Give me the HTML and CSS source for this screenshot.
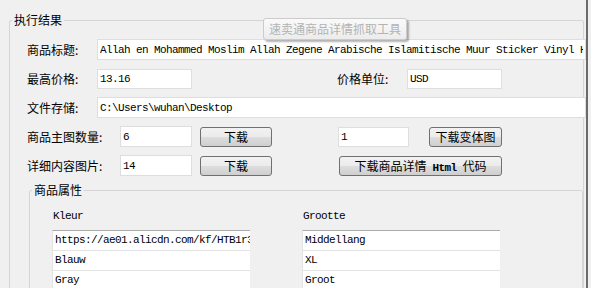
FILE: index.html
```html
<!DOCTYPE html>
<html lang="zh-CN">
<head>
  <meta charset="UTF-8">
  <title>速卖通商品详情抓取工具</title>
  <link rel="stylesheet" href="styles.css">
</head>
<body>
  <div class="window">
    <!-- 执行结果 -->
    <fieldset class="group result">
      <legend>执行结果</legend>
      <div class="rows">
        <div class="row">
          <span class="label">商品标题:</span>
          <input class="field wide" type="text" value="Allah en Mohammed Moslim Allah Zegene Arabische Islamitische Muur Sticker Vinyl Home Decor">
        </div>
        <div class="row">
          <span class="label">最高价格:</span>
          <input class="field price" type="text" value="13.16">
          <span class="label unit-label">价格单位:</span>
          <input class="field price" type="text" value="USD">
        </div>
        <div class="row">
          <span class="label">文件存储:</span>
          <input class="field wide" type="text" value="C:\Users\wuhan\Desktop">
        </div>
        <div class="row">
          <span class="label long">商品主图数量:</span>
          <input class="field count" type="text" value="6">
          <button class="btn small">下载</button>
          <input class="field variant" type="text" value="1">
          <button class="btn variant-btn">下载变体图</button>
        </div>
        <div class="row">
          <span class="label long">详细内容图片:</span>
          <input class="field count" type="text" value="14">
          <button class="btn small">下载</button>
          <button class="btn html-btn">下载商品详情<span class="mono">Html</span>代码</button>
        </div>
      </div>

      <!-- 商品属性 -->
      <fieldset class="group attrs">
        <legend>商品属性</legend>
        <div class="columns">
          <div class="column">
            <div class="col-title">Kleur</div>
            <div class="list">
              <div class="cell">https://ae01.alicdn.com/kf/HTB1r3</div>
              <div class="cell">Blauw</div>
              <div class="cell">Gray</div>
            </div>
          </div>
          <div class="column">
            <div class="col-title">Grootte</div>
            <div class="list">
              <div class="cell">Middellang</div>
              <div class="cell">XL</div>
              <div class="cell">Groot</div>
            </div>
          </div>
        </div>
      </fieldset>
    </fieldset>

    <div class="tooltip">速卖通商品详情抓取工具</div>
  </div>
</body>
</html>
```

FILE: styles.css
```css
body {
  margin: 0;
  background-color: #f0f0f0;
  font-family: "Noto Sans CJK SC", "Liberation Sans", sans-serif;
  font-size: 12px;
  color: #000;
}
.window {
  position: relative;
  width: 586px;
  height: 288px;
  border-right: 2px solid #6b6b6b;
  overflow: hidden;
}
.group {
  margin: 0;
  padding: 0;
  border: 1px solid #d5d5d5;
  border-radius: 2px;
  min-width: 0;
}
.group legend {
  margin-left: 2px;
  padding: 0 2px;
  font-size: 12px;
  line-height: 14px;
}
.result {
  margin: 13px 0 0 9px;
  width: 573px;
  height: 320px;
}
.rows {
  display: flex;
  flex-direction: column;
  gap: 8px;
  padding: 12px 0 0 17px;
}
.row {
  display: flex;
  align-items: center;
  height: 21px;
}
.label {
  width: 70px;
  flex: none;
  white-space: nowrap;
}
.label.long {
  width: 93px;
}
.unit-label {
  margin-left: 145px;
}
.field {
  box-sizing: border-box;
  height: 21px;
  margin: 0;
  padding: 0 2px;
  border: 1px solid #dedede;
  background: #fff;
  font-family: "Liberation Mono", monospace;
  font-size: 11px;
  letter-spacing: -0.6px;
  color: #000;
  outline: none;
  flex: none;
}
.field.wide {
  width: 489px;
}
.field.price {
  width: 95px;
  height: 20px;
}
.field.count {
  width: 72px;
}
.field.variant {
  width: 71px;
  height: 20px;
  margin-left: 66px;
}
.btn {
  box-sizing: border-box;
  height: 20px;
  margin: 0;
  padding: 0;
  border: 1px solid #707070;
  border-radius: 3px;
  background: linear-gradient(#f2f2f2 0%, #ebebeb 50%, #dddddd 51%, #cfcfcf 100%);
  font-family: "Noto Sans CJK SC", sans-serif;
  font-size: 12px;
  line-height: 18px;
  color: #000;
  flex: none;
}
.btn.small {
  width: 72px;
  margin-left: 8px;
}
.btn.variant-btn {
  width: 73px;
  margin-left: 20px;
}
.btn.html-btn {
  width: 163px;
  margin-left: 67px;
}
.mono {
  margin: 0 6px;
  font-family: "Liberation Mono", monospace;
  font-size: 11px;
  font-weight: bold;
  letter-spacing: -0.6px;
}
.attrs {
  margin: 7px 0 0 19px;
  width: 552px;
  height: 200px;
}
.columns {
  display: flex;
  gap: 52px;
  padding-left: 22px;
}
.column {
  width: 198px;
}
.col-title {
  margin-top: 12px;
  height: 14px;
  line-height: 14px;
  padding-left: 1px;
  font-family: "Liberation Mono", monospace;
  font-size: 11px;
  letter-spacing: -0.6px;
}
.list {
  margin-top: 7px;
  border-top: 1px solid #ababab;
  border-left: 1px solid #e3e3e3;
  background: #fff;
}
.cell {
  height: 19px;
  line-height: 19px;
  padding-left: 2px;
  border-bottom: 1px solid #e3e3e3;
  white-space: nowrap;
  overflow: hidden;
  font-family: "Liberation Mono", monospace;
  font-size: 11px;
  letter-spacing: -0.6px;
}
.tooltip {
  position: absolute;
  left: 263px;
  top: 18px;
  width: 144px;
  height: 22px;
  box-sizing: border-box;
  border: 1px solid #cbcbcb;
  border-radius: 3px;
  background: linear-gradient(#fafafa, #ececec);
  box-shadow: 2px 2px 2px rgba(0, 0, 0, 0.3);
  color: #b3b3b3;
  font-size: 12px;
  line-height: 20px;
  text-align: center;
}
```
